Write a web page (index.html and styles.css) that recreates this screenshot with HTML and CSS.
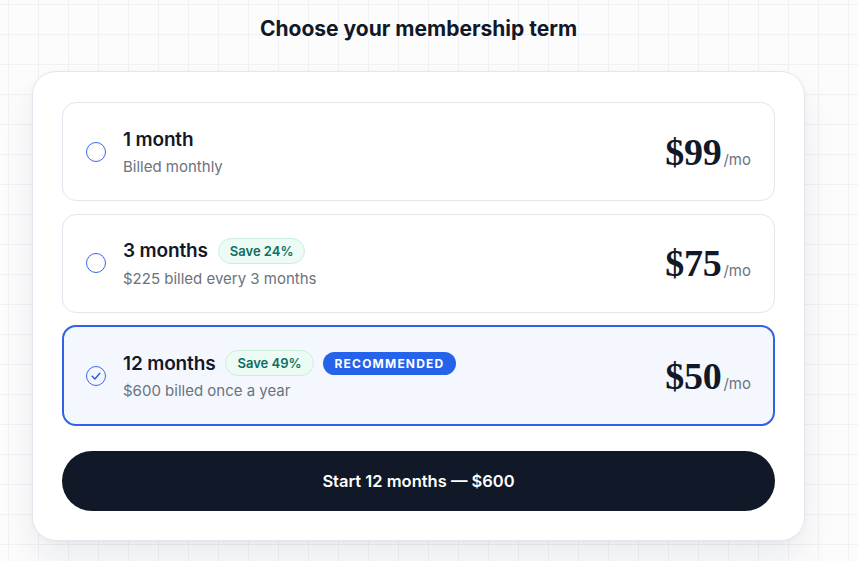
FILE: index.html
```html
<!DOCTYPE html>
<html lang="en">
<head>
<meta charset="utf-8">
<title>Choose your membership term</title>
<link rel="stylesheet" href="styles.css">
</head>
<body>
<main class="page">
  <h1 class="heading">Choose your membership term</h1>
  <section class="card">
    <div class="options">
      <label class="option">
        <span class="radio"></span>
        <span class="info">
          <span class="title-row"><span class="title">1 month</span></span>
          <span class="sub">Billed monthly</span>
        </span>
        <span class="price"><span class="amount">$99</span><span class="per">/mo</span></span>
      </label>
      <label class="option">
        <span class="radio"></span>
        <span class="info">
          <span class="title-row"><span class="title">3 months</span><span class="save">Save 24%</span></span>
          <span class="sub">$225 billed every 3 months</span>
        </span>
        <span class="price"><span class="amount">$75</span><span class="per">/mo</span></span>
      </label>
      <label class="option selected">
        <span class="radio checked">
          <svg viewBox="0 0 20 20" width="20" height="20"><path d="M6.2 10.3 L8.9 13 L13.8 7.3" fill="none" stroke="#2f62e6" stroke-width="1.6" stroke-linecap="round" stroke-linejoin="round"/></svg>
        </span>
        <span class="info">
          <span class="title-row"><span class="title">12 months</span><span class="save">Save 49%</span><span class="rec">RECOMMENDED</span></span>
          <span class="sub">$600 billed once a year</span>
        </span>
        <span class="price"><span class="amount">$50</span><span class="per">/mo</span></span>
      </label>
    </div>
    <button class="cta" type="button">Start 12 months — $600</button>
  </section>
</main>
</body>
</html>
```

FILE: styles.css
```css
* { box-sizing: border-box; }

html, body { height: 100%; }

body {
  margin: 0;
  font-family: Inter, "Noto Sans", sans-serif;
  color: #111827;
  background-color: #fcfcfd;
  background-image:
    linear-gradient(to right, #f0f1f4 1px, transparent 1px),
    linear-gradient(to bottom, #f0f1f4 1px, transparent 1px);
  background-size: 30px 30px;
  background-position: 8px 4px;
}

.page {
  width: 773px;
  margin-left: 32px;
  padding-top: 15px;
}

.heading {
  margin: 0;
  text-align: center;
  font-size: 21px;
  font-weight: 700;
  line-height: 28px;
  letter-spacing: 0;
  color: #111827;
}

.card {
  margin-top: 28px;
  background: #fff;
  border: 1px solid #e4e6ee;
  border-radius: 24px;
  padding: 30px 29px 29px;
  box-shadow: 0 18px 36px rgba(15, 23, 42, 0.07), 0 2px 6px rgba(15, 23, 42, 0.03);
}

.options {
  display: flex;
  flex-direction: column;
  gap: 12.5px;
}

.option {
  display: flex;
  align-items: center;
  height: 99px;
  padding: 0 23px;
  border: 1px solid #e3e6ee;
  border-radius: 14px;
  background: #fff;
}

.option.selected {
  height: 101px;
  padding: 0 22px;
  border: 2px solid #2f62e6;
  background: #f4f8fe;
}

.radio {
  flex: none;
  width: 20px;
  height: 20px;
  border-radius: 50%;
  border: 1.5px solid #3a66ee;
  display: flex;
  align-items: center;
  justify-content: center;
}

.radio svg { display: block; margin: -1.5px; }

.info {
  flex: 1;
  display: flex;
  flex-direction: column;
  margin-left: 17px;
  gap: 5px;
}

.title-row {
  display: flex;
  align-items: center;
  gap: 10px;
  height: 26px;
}

.title {
  font-size: 19px;
  font-weight: 600;
  color: #111827;
  letter-spacing: -0.15px;
}

.sub {
  font-size: 15px;
  color: #6b7280;
  line-height: 20px;
}

.save {
  display: inline-flex;
  align-items: center;
  height: 26px;
  padding: 0 11px;
  border-radius: 13px;
  background: #ecfbf4;
  border: 1px solid #cdeedf;
  color: #0f6e5f;
  font-size: 13px;
  font-weight: 600;
}

.rec {
  display: inline-flex;
  align-items: center;
  height: 23px;
  padding: 0 12px;
  border-radius: 12px;
  background: #2563eb;
  color: #fff;
  font-size: 12px;
  font-weight: 700;
  letter-spacing: 1.2px;
  margin-left: -1px;
}

.price {
  display: flex;
  align-items: baseline;
  margin-top: 0;
}

.amount {
  font-family: "Liberation Serif", "Times New Roman", serif;
  font-weight: 700;
  font-size: 38px;
  color: #111827;
  letter-spacing: -0.3px;
}

.per {
  font-size: 15px;
  color: #6b7280;
  margin-left: 2px;
}

.cta {
  display: block;
  width: 100%;
  height: 60px;
  margin-top: 25px;
  border: 0;
  border-radius: 30px;
  background: #111827;
  color: #fff;
  font-family: Inter, "Noto Sans", sans-serif;
  font-size: 16.5px;
  font-weight: 600;
  letter-spacing: 0;
  cursor: pointer;
}
```
